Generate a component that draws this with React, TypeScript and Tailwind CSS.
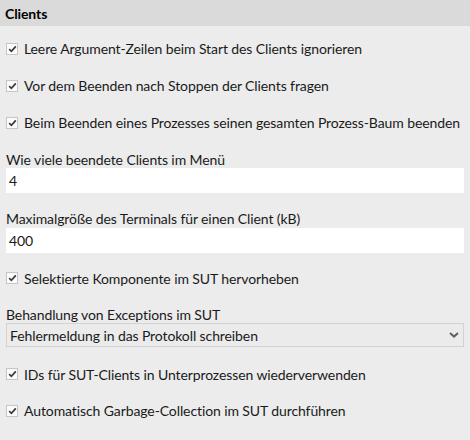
import { ReactNode } from 'react'

const font = { fontFamily: 'Lato, "Noto Sans", sans-serif' }

function CheckRow({ label, className = 'h-[37px]' }: { label: string; className?: string }) {
  return (
    <div className={`flex items-center gap-[6px] ${className}`}>
      <span className="flex h-[12px] w-[12px] shrink-0 items-center justify-center border border-[#c6c6c6] bg-[#fbfbfb]">
        <svg width="9" height="8" viewBox="0 0 9 8" fill="none">
          <path d="M1.2 4.2 L3.4 6.3 L7.8 1.4" stroke="#3a3a3a" strokeWidth="1.7" />
        </svg>
      </span>
      <span className="whitespace-nowrap">{label}</span>
    </div>
  )
}

function Label({ children, className }: { children: ReactNode; className: string }) {
  return <div className={`flex items-center whitespace-nowrap ${className}`}>{children}</div>
}

function TextField({ value, className }: { value: string; className: string }) {
  return (
    <div className={`flex items-center bg-white pl-[3px] ${className}`}>
      <span>{value}</span>
    </div>
  )
}

export default function App() {
  return (
    <div className="h-[440px] w-[470px] bg-[#ececec] text-[14px] tracking-[-0.1px] text-[#1a1a1a]" style={font}>
      <div className="flex h-[26px] items-center bg-[#dadada] pl-[5px] font-bold text-black">Clients</div>
      <div className="flex flex-col pl-[6px] pr-[6px] pt-[4px]">
        <CheckRow label="Leere Argument-Zeilen beim Start des Clients ignorieren" />
        <CheckRow label="Vor dem Beenden nach Stoppen der Clients fragen" />
        <CheckRow label="Beim Beenden eines Prozesses seinen gesamten Prozess-Baum beenden" />

        <Label className="mt-[10px] h-[17px]">Wie viele beendete Clients im Menü</Label>
        <TextField value="4" className="h-[25px]" />

        <Label className="mt-[15px] h-[20px]">Maximalgröße des Terminals für einen Client (kB)</Label>
        <TextField value="400" className="h-[25px]" />

        <CheckRow label="Selektierte Komponente im SUT hervorheben" className="mt-[7px] h-[36px]" />

        <Label className="mt-[9px] h-[18px]">Behandlung von Exceptions im SUT</Label>
        <div className="flex h-[24px] items-center justify-between border border-[#d2d2d2] bg-[#ebebeb] pl-[3px] pr-[4px]">
          <span>Fehlermeldung in das Protokoll schreiben</span>
          <svg width="10" height="6" viewBox="0 0 10 6" fill="none">
            <path d="M1 1 L5 4.6 L9 1" stroke="#606060" strokeWidth="2" />
          </svg>
        </div>

        <CheckRow label="IDs für SUT-Clients in Unterprozessen wiederverwenden" className="mt-[9px] h-[36px]" />
        <CheckRow label="Automatisch Garbage-Collection im SUT durchführen" className="h-[37px]" />
      </div>
    </div>
  )
}
